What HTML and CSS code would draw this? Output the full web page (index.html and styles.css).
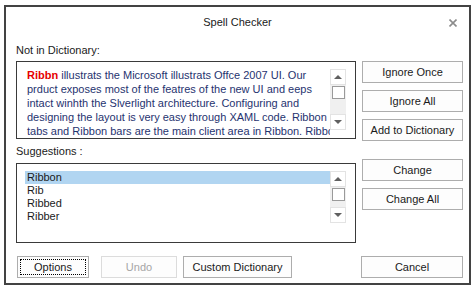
FILE: index.html
```html
<!DOCTYPE html>
<html lang="en">
<head>
  <meta charset="UTF-8" />
  <title>Spell Checker</title>
  <link rel="stylesheet" href="styles.css">
</head>
<body>

<div class="dialog">
  <div class="titlebar">
    <span></span>
    <span class="title">Spell Checker</span>
    <span class="close">
      <svg width="8" height="8" viewBox="0 0 8 8">
        <path d="M0.5 0.5 L7.5 7.5 M7.5 0.5 L0.5 7.5" stroke="#8c8c8c" stroke-width="1.6" fill="none"/>
      </svg>
    </span>
  </div>

  <div class="content">
    <div class="section first">
      <div class="left">
        <div class="label">Not in Dictionary:</div>
        <div class="box textbox">
          <div class="text">
            <span class="misspelled">Ribbn</span> illustrats the Microsoft illustrats Offce 2007 UI. Our<br>
            prduct exposes most of the featres of the new UI and eeps<br>
            intact winhth the Slverlight architecture. Configuring and<br>
            designing the layout is very easy through XAML code. Ribbon<br>
            tabs and Ribbon bars are the main client area in Ribbon. Ribbon
          </div>
          <div class="scrollbar">
            <div class="sb-btn"><span class="arrow up"></span></div>
            <div class="track"><span class="thumb"></span></div>
            <div class="sb-btn"><span class="arrow down"></span></div>
          </div>
        </div>
      </div>
      <div class="actions">
        <button class="btn">Ignore Once</button>
        <button class="btn">Ignore All</button>
        <button class="btn">Add to Dictionary</button>
      </div>
    </div>

    <div class="section second">
      <div class="left">
        <div class="label">Suggestions :</div>
        <div class="box listbox">
          <ul class="items">
            <li class="selected">Ribbon</li>
            <li>Rib</li>
            <li>Ribbed</li>
            <li>Ribber</li>
          </ul>
          <div class="scrollbar">
            <div class="sb-btn"><span class="arrow up"></span></div>
            <div class="track short"><span class="thumb"></span></div>
            <div class="sb-btn"><span class="arrow down"></span></div>
          </div>
        </div>
      </div>
      <div class="actions lower">
        <button class="btn">Change</button>
        <button class="btn">Change All</button>
      </div>
    </div>

    <div class="footer">
      <button class="btn options">Options</button>
      <button class="btn undo" disabled>Undo</button>
      <button class="btn custom">Custom Dictionary</button>
      <button class="btn cancel">Cancel</button>
    </div>
  </div>
</div>

</body>
</html>
```

FILE: styles.css
```css
* {
  box-sizing: border-box;
}

body {
  margin: 5px 0 0 4px;
  background-color: #ffffff;
  font-family: "Liberation Sans", Arial, sans-serif;
  font-size: 11px;
  color: #1a1a1a;
}

.dialog {
  width: 467px;
  height: 280px;
  border: 2px solid #434343;
  background-color: #ffffff;
  display: flex;
  flex-direction: column;
}

.titlebar {
  height: 36px;
  display: grid;
  grid-template-columns: 1fr auto 1fr;
  align-items: start;
  padding-top: 8px;
  line-height: 14px;
}

.title {
  color: #1a1a1a;
}

.close {
  justify-self: end;
  padding-right: 12px;
  margin-top: 4px;
  display: flex;
}

.content {
  padding: 0 6px 5px 10px;
  display: flex;
  flex-direction: column;
}

.section {
  display: flex;
  gap: 6px;
}

.section.second {
  margin-top: 3px;
}

.left {
  width: 340px;
}

.label {
  line-height: 14px;
  margin-bottom: 4px;
}

.second .label {
  margin-bottom: 5px;
}

.box {
  border: 1px solid #3a3a3a;
  display: flex;
  overflow: hidden;
}

.textbox {
  height: 78px;
}

.text {
  flex: 1;
  padding: 6px 0 0 10px;
  line-height: 14px;
  white-space: nowrap;
  overflow: hidden;
  color: #1f336f;
}

.misspelled {
  color: #e60000;
  font-weight: bold;
}

.listbox {
  height: 80px;
  padding: 7px 0 0 8px;
}

.items {
  flex: 1;
  list-style: none;
  margin: 0;
  padding: 0;
}

.items li {
  line-height: 13px;
  padding-left: 2px;
}

.items li.selected {
  background-color: #b1d5f1;
}

.scrollbar {
  width: 16px;
  margin: 7px 9px 0 0;
  display: flex;
  flex-direction: column;
  align-self: flex-start;
}

.listbox .scrollbar {
  margin-top: 0;
}

.sb-btn {
  height: 16px;
  border: 1px solid #e3e3e3;
  background-color: #ffffff;
  display: flex;
  align-items: center;
  justify-content: center;
}

.arrow {
  width: 0;
  height: 0;
  border-left: 4px solid transparent;
  border-right: 4px solid transparent;
}

.arrow.up {
  border-bottom: 4px solid #606060;
}

.arrow.down {
  border-top: 4px solid #606060;
}

.track {
  height: 29px;
  background-color: #f0f0f0;
  padding: 1px 0 0 2px;
}

.track.short {
  height: 20px;
}

.thumb {
  display: block;
  width: 13px;
  height: 13px;
  border: 1px solid #9a9a9a;
  background-color: #ffffff;
}

.actions {
  display: flex;
  flex-direction: column;
  gap: 7px;
  padding-top: 18px;
}

.actions.lower {
  padding-top: 15px;
}

.btn {
  width: 101px;
  height: 22px;
  border: 1px solid #adadad;
  background-color: #fdfdfd;
  font-family: inherit;
  font-size: 11px;
  color: #1a1a1a;
  padding: 0;
}

.btn:disabled {
  border-color: #dcdcdc;
  color: #a6a6a6;
}

.footer {
  margin-top: 13px;
  display: flex;
}

.options {
  width: 72px;
  margin-left: 1px;
  outline: 1px dotted #000000;
  outline-offset: -4px;
}

.undo {
  width: 76px;
  margin-left: 12px;
}

.custom {
  width: 109px;
  margin-left: 6px;
}

.cancel {
  width: 102px;
  margin-left: auto;
}
```
